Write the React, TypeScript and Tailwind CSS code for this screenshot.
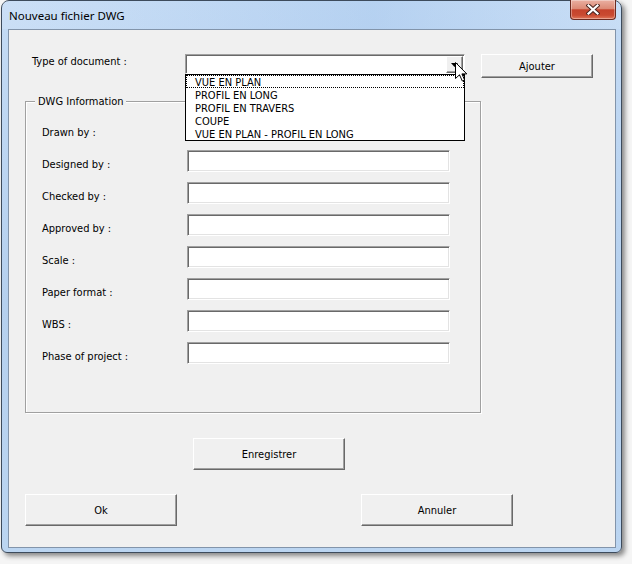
import React from 'react';

const fields = [
  'Drawn by :',
  'Designed by :',
  'Checked by :',
  'Approved by :',
  'Scale :',
  'Paper format :',
  'WBS :',
  'Phase of project :',
];

const options = [
  'VUE EN PLAN',
  'PROFIL EN LONG',
  'PROFIL EN TRAVERS',
  'COUPE',
  'VUE EN PLAN - PROFIL EN LONG',
];

function WinButton({ label, className }: { label: string; className?: string }) {
  return (
    <button
      className={`flex items-center justify-center bg-[#f0f0f0] border border-t-white border-l-white border-r-[#696969] border-b-[#696969] shadow-[inset_-1px_-1px_0_#a0a0a0] text-[11px] leading-[13px] text-black ${className ?? ''}`}
    >
      {label}
    </button>
  );
}

function TextBox() {
  return (
    <div className="w-[263px] h-[22px] bg-white border border-t-[#a0a0a0] border-l-[#a0a0a0] border-r-white border-b-white shadow-[inset_1px_1px_0_#696969,inset_-1px_-1px_0_#e3e3e3]" />
  );
}

function CloseButton() {
  return (
    <div className="-mt-[1px] w-[46px] h-[20px] rounded-b-[4px] border border-t-0 border-[#6b2a20] bg-[linear-gradient(to_bottom,#eab0a2_0%,#dc8a76_45%,#c5432c_52%,#c94a31_80%,#e0775a_100%)] shadow-[inset_0_0_0_1px_rgba(255,255,255,0.35)] flex items-center justify-center">
      <svg width="14" height="11" viewBox="0 0 14 11">
        <path d="M2.5 1.5 L11.5 9.5 M11.5 1.5 L2.5 9.5" stroke="#4a2520" strokeWidth="4.2" strokeLinecap="square" />
        <path d="M2.5 1.5 L11.5 9.5 M11.5 1.5 L2.5 9.5" stroke="#ffffff" strokeWidth="2.2" strokeLinecap="square" />
      </svg>
    </div>
  );
}

export default function App() {
  return (
    <div className="w-[632px] h-[564px] bg-[#f5f5f5] overflow-hidden font-['DejaVu_Sans_Condensed','DejaVu_Sans',sans-serif] text-black">
      <div className="ml-[1px] w-[621px] h-[553px] rounded-t-[8px] rounded-b-[6px] border border-[#3d4b5c] bg-[linear-gradient(to_bottom,#c4dbf5,#b5d0ee_55%,#bbd5f1)] shadow-[3px_3px_5px_rgba(0,0,0,0.45)] flex flex-col">
        {/* title bar */}
        <div className="h-[28px] flex items-start justify-between pl-[7px] pr-[5px] bg-[linear-gradient(to_right,rgba(255,255,255,0.12),rgba(150,188,232,0.3)_60%,rgba(255,255,255,0.08))]">
          <span className="mt-[7px] font-['Noto_Sans',sans-serif] text-[11.5px] leading-[16px] text-black">
            Nouveau fichier DWG
          </span>
          <CloseButton />
        </div>

        {/* client area */}
        <div className="ml-[6px] w-[608px] h-[519px] border border-[#8294aa] bg-[#f0f0f0] text-[11px]">
          <div className="flex items-start pt-[24px]">
            <div className="pl-[23px] w-[176px] leading-[14px] pt-[1px]">Type of document :</div>
            <div className="relative w-[280px] h-[20px] bg-white border border-t-[#a0a0a0] border-l-[#a0a0a0] border-r-white border-b-white shadow-[inset_1px_1px_0_#696969] flex items-start justify-end pt-[1px] pr-[1px]">
              <div className="w-[17px] h-[17px] bg-[#f0f0f0] border border-t-white border-l-white border-r-[#696969] border-b-[#696969] shadow-[inset_-1px_-1px_0_#a0a0a0] flex items-center justify-center">
                <svg width="7" height="4" viewBox="0 0 7 4">
                  <path d="M0 0 H7 L3.5 4 Z" fill="#000" />
                </svg>
              </div>
              <div className="absolute left-[-1px] top-[19px] w-[280px] border border-black bg-white z-10">
                {options.map((o, i) => (
                  <div
                    key={o}
                    className={`h-[13px] pt-[1px] leading-[13px] pl-[9px] text-[11px] whitespace-nowrap ${i === 0 ? 'outline-1 outline-dotted outline-black -outline-offset-1' : ''}`}
                  >
                    {o}
                  </div>
                ))}
              </div>
              <svg className="absolute left-[269px] top-[7px] z-20" width="13" height="20" viewBox="0 0 13 20">
                <path d="M0.5 0.5 L0.5 16.5 L4.5 12.8 L7.3 19 L9.6 18 L6.9 11.9 L11.8 11.9 Z" fill="#fff" stroke="#000" strokeWidth="1" strokeLinejoin="miter" />
              </svg>
            </div>
            <WinButton label="Ajouter" className="ml-[16px] w-[112px] h-[24px]" />
          </div>

          {/* DWG Information group */}
          <div className="relative mt-[23px] ml-[16px] w-[456px] h-[312px] border border-[#a0a0a0] shadow-[inset_1px_1px_0_#fff,1px_1px_0_#fff]">
            <div className="absolute left-[9px] -top-[7px] px-[3px] bg-[#f0f0f0] leading-[14px]">DWG Information</div>
            <div className="flex flex-col gap-[10px] pt-[16px] pl-[16px]">
              {fields.map((f) => (
                <div key={f} className="flex items-start h-[22px]">
                  <div className="w-[145px] pt-[8px] leading-[14px] whitespace-nowrap">{f}</div>
                  <TextBox />
                </div>
              ))}
            </div>
          </div>

          <WinButton label="Enregistrer" className="mt-[25px] ml-[184px] w-[152px] h-[32px]" />

          <div className="flex gap-[184px] mt-[24px] ml-[16px]">
            <WinButton label="Ok" className="w-[152px] h-[32px]" />
            <WinButton label="Annuler" className="w-[152px] h-[32px]" />
          </div>
        </div>
      </div>
    </div>
  );
}
